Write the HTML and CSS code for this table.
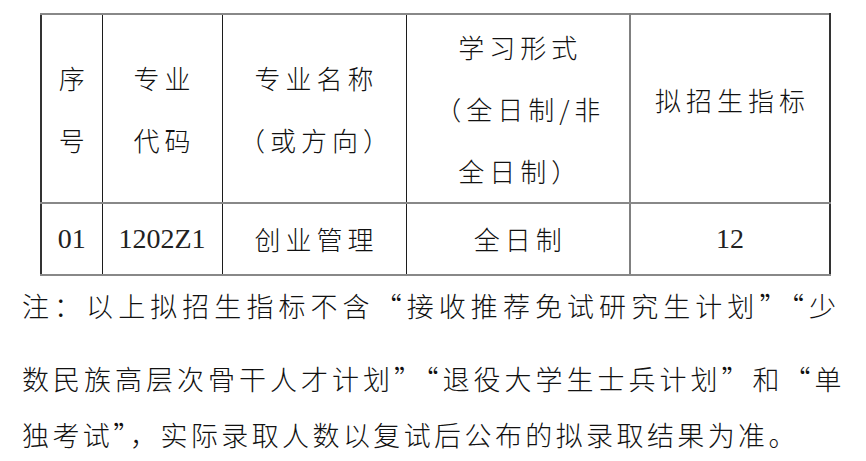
FILE: index.html
```html
<!DOCTYPE html>
<html lang="zh-CN">
<head>
<meta charset="utf-8">
<link rel="stylesheet" href="styles.css">
</head>
<body>
<div class="page">
  <table class="plan">
    <colgroup>
      <col class="w1"><col class="w2"><col class="w3"><col class="w4"><col class="w5">
    </colgroup>
    <tr class="head">
      <td class="c1">序<br>号</td>
      <td class="c2">专业<br>代码</td>
      <td class="c3">专业名称<br>（或方向）</td>
      <td class="c4">学习形式<br>（全日制/非<br>全日制）</td>
      <td class="c5 raised">拟招生指标</td>
    </tr>
    <tr class="data">
      <td class="c1 num">01</td>
      <td class="c2 num">1202Z1</td>
      <td class="c3">创业管理</td>
      <td class="c4">全日制</td>
      <td class="c5 num">12</td>
    </tr>
  </table>
  <div class="note">
    <div class="line l1">注：以上拟招生指标不含“接收推荐免试研究生计划”“少</div>
    <div class="line l2">数民族高层次骨干人才计划”“退役大学生士兵计划”和“单</div>
    <div class="line l3">独考试”，实际录取人数以复试后公布的拟录取结果为准。</div>
  </div>
</div>
</body>
</html>
```
FILE: styles.css
```css
html, body {
  margin: 0;
  padding: 0;
  background: #ffffff;
}
.page {
  width: 866px;
  height: 461px;
  overflow: hidden;
  color: #111111;
  font-family: "Noto Sans CJK SC", "Noto Sans", sans-serif;
  font-weight: 300;
}
.plan {
  border-collapse: collapse;
  margin: 13px 0 0 40px;
  table-layout: fixed;
  width: 789px;
}
.w1 { width: 61px; }
.w2 { width: 120px; }
.w3 { width: 184px; }
.w4 { width: 224px; }
.w5 { width: 200px; }
.plan td {
  padding: 0 0 0 5px;
  text-align: center;
  vertical-align: middle;
  font-size: 26px;
  letter-spacing: 5px;
  border-top: 2px solid #888888;
  border-bottom: 2px solid #888888;
  border-left: 1px solid #1c1c1c;
  border-right: 1px solid #1c1c1c;
  white-space: nowrap;
}
.plan .c4 { border-right: 2px solid #808080; }
.plan .c5 { border-right: 2px solid #333333; }
.plan .c1 { border-left: 2px solid #333333; }
.head td {
  height: 187px;
  line-height: 62px;
}
.head td.raised {
  padding-bottom: 18px;
  height: 169px;
}
.data td {
  height: 70px;
  line-height: 70px;
}
.plan td.num {
  font-family: "Liberation Serif", serif;
  font-weight: normal;
  font-size: 28px;
  letter-spacing: 0;
  padding: 0;
  color: #222222;
}
.note {
  font-size: 27px;
  letter-spacing: 4px;
}
.line {
  white-space: nowrap;
  margin-left: 22px;
  width: 818px;
  line-height: 56px;
}
.l1 {
  margin-top: 2px;
  text-align: justify;
  text-align-last: justify;
}
.l2 {
  margin-top: 17px;
  text-align: justify;
  text-align-last: justify;
}
.l3 {
  margin-top: 0;
  letter-spacing: 3.4px;
}
```
